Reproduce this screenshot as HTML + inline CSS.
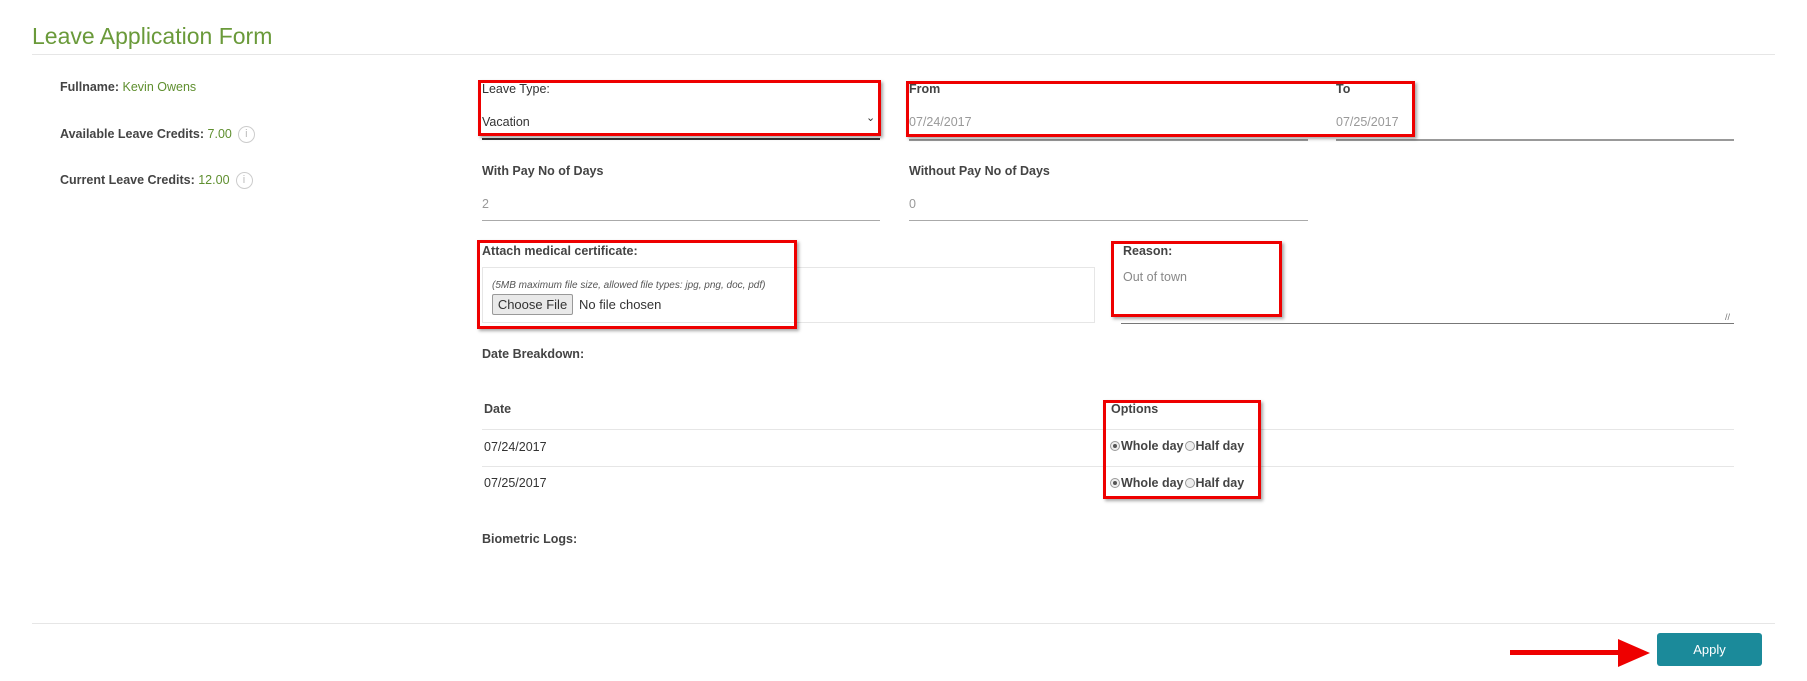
<!DOCTYPE html>
<html><head><meta charset="utf-8"><style>
*{margin:0;padding:0;box-sizing:border-box}
body{width:1807px;height:681px;background:#fff;position:relative;overflow:hidden;font-family:"Liberation Sans",sans-serif;color:#333;font-size:12.5px}
.a{position:absolute;white-space:nowrap}
.b{font-weight:bold;color:#444}
.g{color:#5f8f2f}
.v{color:#999}
.line{position:absolute;height:1px;background:#e6e6e6}
.ul{position:absolute;height:2px;background:#999}
.red{position:absolute;border:3px solid #e00;box-shadow:2px 2px 3px rgba(0,0,0,.35)}
.info{display:inline-block;width:17px;height:17px;border:1px solid #ccc;border-radius:50%;color:#bbb;font-size:11px;text-align:center;line-height:15px;vertical-align:middle;margin-left:6px;font-weight:normal}
.radio{display:inline-block;width:10px;height:10px;border:1px solid #999;border-radius:50%;background:#eee;vertical-align:-1px;position:relative;margin:0 1px}
.radio.on::after{content:"";position:absolute;left:2px;top:2px;width:4px;height:4px;border-radius:50%;background:#555}
</style></head><body>
<div class="a g" style="left:32px;top:23px;font-size:23px;color:#6a9a3a">Leave Application Form</div>
<div class="line" style="left:32px;top:54px;width:1743px"></div>

<div class="a b" style="left:60px;top:80px">Fullname: <span class="g" style="font-weight:normal">Kevin Owens</span></div>
<div class="a b" style="left:60px;top:126px">Available Leave Credits: <span class="g" style="font-weight:normal">7.00</span><span class="info">i</span></div>
<div class="a b" style="left:60px;top:172px">Current Leave Credits: <span class="g" style="font-weight:normal">12.00</span><span class="info">i</span></div>

<div class="a" style="left:482px;top:82px">Leave Type:</div>
<div class="a" style="left:482px;top:115px">Vacation</div>
<div class="a" style="left:866px;top:111px;font-size:11px">&#8964;</div>
<div class="ul" style="left:482px;top:138px;width:398px;background:#333"></div>
<div class="red" style="left:478px;top:80px;width:403px;height:56px"></div>

<div class="a b" style="left:909px;top:82px">From</div>
<div class="a b" style="left:1336px;top:82px">To</div>
<div class="a v" style="left:909px;top:115px">07/24/2017</div>
<div class="a v" style="left:1336px;top:115px">07/25/2017</div>
<div class="ul" style="left:909px;top:139px;width:399px"></div>
<div class="ul" style="left:1336px;top:139px;width:398px"></div>
<div class="red" style="left:906px;top:81px;width:509px;height:56px"></div>

<div class="a b" style="left:482px;top:164px">With Pay No of Days</div>
<div class="a v" style="left:482px;top:197px">2</div>
<div class="ul" style="left:482px;top:220px;width:398px;background:#aaa;height:1px"></div>
<div class="a b" style="left:909px;top:164px">Without Pay No of Days</div>
<div class="a v" style="left:909px;top:197px">0</div>
<div class="ul" style="left:909px;top:220px;width:399px;background:#aaa;height:1px"></div>

<div class="a b" style="left:482px;top:244px">Attach medical certificate:</div>
<div class="a" style="left:482px;top:267px;width:613px;height:56px;border:1px solid #e6e6e6"></div>
<div class="a" style="left:492px;top:280px;font-size:10px;font-style:italic;color:#555">(5MB maximum file size, allowed file types: jpg, png, doc, pdf)</div>
<div class="a" style="left:492px;top:294px;width:81px;height:21px;border:1px solid #999;background:#e9e9e9;font-size:13px;text-align:center;line-height:19px;border-radius:2px">Choose File</div>
<div class="a" style="left:579px;top:297px;font-size:13px">No file chosen</div>
<div class="red" style="left:477px;top:240px;width:320px;height:89px"></div>

<div class="a b" style="left:1123px;top:244px">Reason:</div>
<div class="a v" style="left:1123px;top:270px;color:#888">Out of town</div>
<div class="ul" style="left:1121px;top:323px;width:613px;height:1px;background:#777"></div>
<div class="a" style="left:1725px;top:312px;font-size:9px;color:#777">//</div>
<div class="red" style="left:1111px;top:241px;width:171px;height:76px"></div>

<div class="a b" style="left:482px;top:347px">Date Breakdown:</div>
<div class="a b" style="left:484px;top:402px">Date</div>
<div class="a b" style="left:1111px;top:402px">Options</div>
<div class="line" style="left:482px;top:429px;width:1252px"></div>
<div class="line" style="left:482px;top:466px;width:1252px"></div>
<div class="a" style="left:484px;top:440px">07/24/2017</div>
<div class="a" style="left:484px;top:476px">07/25/2017</div>
<div class="a b" style="left:1109px;top:439px"><span class="radio on"></span>Whole day<span class="radio"></span>Half day</div>
<div class="a b" style="left:1109px;top:476px"><span class="radio on"></span>Whole day<span class="radio"></span>Half day</div>
<div class="red" style="left:1103px;top:400px;width:158px;height:99px"></div>

<div class="a b" style="left:482px;top:532px">Biometric Logs:</div>
<div class="line" style="left:32px;top:623px;width:1743px"></div>

<svg class="a" style="left:1508px;top:636px" width="146" height="34"><path d="M2 14 H116 V19 H2 Z" fill="#e00"/><path d="M110 3 L142 17 L110 31 Z" fill="#e00"/></svg>
<div class="a" style="left:1657px;top:633px;width:105px;height:33px;background:#1b8a9a;color:#fff;text-align:center;line-height:33px;border-radius:3px;font-size:13px">Apply</div>
</body></html>
